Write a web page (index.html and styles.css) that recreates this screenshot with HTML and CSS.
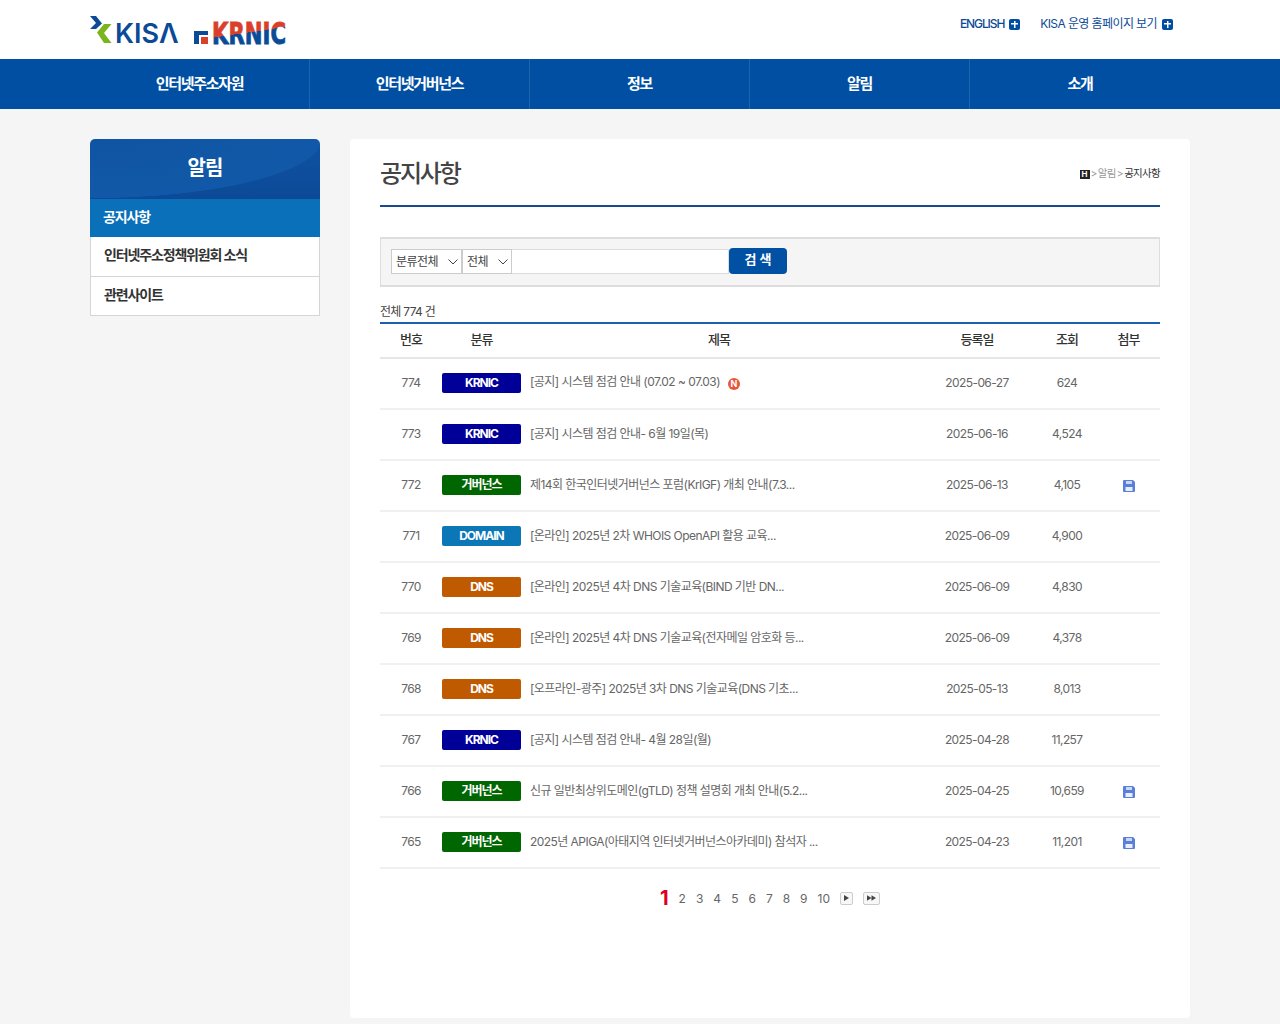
FILE: index.html
```html
<!DOCTYPE html>
<html lang="ko">
<head>
<meta charset="utf-8">
<title>공지사항</title>
<link rel="stylesheet" href="styles.css">
</head>
<body>
<header class="top">
  <div class="wrap top-inner">
    <div class="logos">
      <a class="logo-kisa">
        <svg class="kisa-mark" viewBox="0 0 22 28" width="22" height="28"><path d="M0 0 L6 0 L12 7.5 L6 13 L0 13 L6 7 Z" fill="#0b4a96"/><path d="M21.5 8 L14 8 L7 16.5 L14 27 L21.5 27 L14 17 Z" fill="#7ab51d"/></svg>
        <span class="kisa-text">KISΛ</span>
      </a>
      <a class="logo-krnic">
        <svg class="krnic-mark" viewBox="0 0 14 14" width="14" height="14"><path d="M0 1 H14 V5 H5 V14 H0 Z" fill="#0b4a96"/><rect x="7" y="7" width="7" height="7" fill="#d8402c"/></svg>
        <svg class="krnic-word" viewBox="0 0 120 44" width="120" height="44">
          <defs><linearGradient id="krnicFill" gradientUnits="userSpaceOnUse" x1="35.9" y1="17" x2="38.1" y2="32"><stop offset="0.5" stop-color="#d8402c"/><stop offset="0.5" stop-color="#0b4a96"/></linearGradient></defs>
          <text class="krnic-text" x="1" y="36" textLength="74" lengthAdjust="spacingAndGlyphs" fill="url(#krnicFill)" stroke="url(#krnicFill)">KRNIC</text>
        </svg>
      </a>
    </div>
    <div class="util">
      <a class="util-link en">ENGLISH <i class="plus"></i></a>
      <a class="util-link">KISA 운영 홈페이지 보기 <i class="plus"></i></a>
    </div>
  </div>
</header>
<nav class="gnb">
  <div class="wrap gnb-inner">
    <a>인터넷주소자원</a>
    <a>인터넷거버넌스</a>
    <a>정보</a>
    <a>알림</a>
    <a>소개</a>
  </div>
</nav>
<div class="wrap content">
  <aside class="side">
    <h2 class="side-title">알림</h2>
    <a class="side-item active">공지사항</a>
    <a class="side-item">인터넷주소정책위원회 소식</a>
    <a class="side-item">관련사이트</a>
  </aside>
  <main class="main">
    <div class="page-head">
      <h1>공지사항</h1>
      <div class="crumb"><i class="home">H</i> &gt; 알림 &gt; <b>공지사항</b></div>
    </div>
    <form class="search">
      <div class="fake-select s1">분류전체<svg class="chev" viewBox="0 0 10 6" width="10" height="6"><path d="M0.5 0.5 L5 5 L9.5 0.5" fill="none" stroke="#444" stroke-width="1"/></svg></div>
      <div class="fake-select s2">전체<svg class="chev" viewBox="0 0 10 6" width="10" height="6"><path d="M0.5 0.5 L5 5 L9.5 0.5" fill="none" stroke="#444" stroke-width="1"/></svg></div>
      <div class="fake-input"></div>
      <div class="btn">검 색</div>
    </form>
    <p class="total">전체 774 건</p>
    <table class="list">
      <colgroup><col class="c1"><col class="c2"><col class="c3"><col class="c4"><col class="c5"><col class="c6"></colgroup>
      <thead>
        <tr><th>번호</th><th>분류</th><th>제목</th><th>등록일</th><th>조회</th><th>첨부</th></tr>
      </thead>
      <tbody>
        <tr><td>774</td><td><span class="tag krnic">KRNIC</span></td><td class="t">[공지] 시스템 점검 안내 (07.02 ~ 07.03)<i class="new">N</i></td><td>2025-06-27</td><td>624</td><td></td></tr>
        <tr><td>773</td><td><span class="tag krnic">KRNIC</span></td><td class="t">[공지] 시스템 점검 안내- 6월 19일(목)</td><td>2025-06-16</td><td>4,524</td><td></td></tr>
        <tr><td>772</td><td><span class="tag gov">거버넌스</span></td><td class="t">제14회 한국인터넷거버넌스 포럼(KrIGF) 개최 안내(7.3...</td><td>2025-06-13</td><td>4,105</td><td><svg class="disk" viewBox="0 0 12 12" width="12" height="12"><path d="M0 1 Q0 0 1 0 H10 L12 2 V11 Q12 12 11 12 H1 Q0 12 0 11 Z" fill="#5a7fd8"/><rect x="3" y="1" width="6" height="3" fill="#c9d6f5"/><rect x="2.5" y="7" width="7" height="4" fill="#e8eefc"/></svg></td></tr>
        <tr><td>771</td><td><span class="tag domain">DOMAIN</span></td><td class="t">[온라인] 2025년 2차 WHOIS OpenAPI 활용 교육...</td><td>2025-06-09</td><td>4,900</td><td></td></tr>
        <tr><td>770</td><td><span class="tag dns">DNS</span></td><td class="t">[온라인] 2025년 4차 DNS 기술교육(BIND 기반 DN...</td><td>2025-06-09</td><td>4,830</td><td></td></tr>
        <tr><td>769</td><td><span class="tag dns">DNS</span></td><td class="t">[온라인] 2025년 4차 DNS 기술교육(전자메일 암호화 등...</td><td>2025-06-09</td><td>4,378</td><td></td></tr>
        <tr><td>768</td><td><span class="tag dns">DNS</span></td><td class="t">[오프라인-광주] 2025년 3차 DNS 기술교육(DNS 기초...</td><td>2025-05-13</td><td>8,013</td><td></td></tr>
        <tr><td>767</td><td><span class="tag krnic">KRNIC</span></td><td class="t">[공지] 시스템 점검 안내- 4월 28일(월)</td><td>2025-04-28</td><td>11,257</td><td></td></tr>
        <tr><td>766</td><td><span class="tag gov">거버넌스</span></td><td class="t">신규 일반최상위도메인(gTLD) 정책 설명회 개최 안내(5.2...</td><td>2025-04-25</td><td>10,659</td><td><svg class="disk" viewBox="0 0 12 12" width="12" height="12"><path d="M0 1 Q0 0 1 0 H10 L12 2 V11 Q12 12 11 12 H1 Q0 12 0 11 Z" fill="#5a7fd8"/><rect x="3" y="1" width="6" height="3" fill="#c9d6f5"/><rect x="2.5" y="7" width="7" height="4" fill="#e8eefc"/></svg></td></tr>
        <tr><td>765</td><td><span class="tag gov">거버넌스</span></td><td class="t">2025년 APIGA(아태지역 인터넷거버넌스아카데미) 참석자 ...</td><td>2025-04-23</td><td>11,201</td><td><svg class="disk" viewBox="0 0 12 12" width="12" height="12"><path d="M0 1 Q0 0 1 0 H10 L12 2 V11 Q12 12 11 12 H1 Q0 12 0 11 Z" fill="#5a7fd8"/><rect x="3" y="1" width="6" height="3" fill="#c9d6f5"/><rect x="2.5" y="7" width="7" height="4" fill="#e8eefc"/></svg></td></tr>
      </tbody>
    </table>
    <div class="paging">
      <b class="cur">1</b><a>2</a><a>3</a><a>4</a><a>5</a><a>6</a><a>7</a><a>8</a><a>9</a><a>10</a>
      <span class="pg-btn one"><svg viewBox="0 0 6 7" width="5" height="6"><path d="M0 0 L6 3.5 L0 7 Z" fill="#444"/></svg></span>
      <span class="pg-btn two"><svg viewBox="0 0 11 7" width="9" height="6"><path d="M0 0 L5.5 3.5 L0 7 Z M5.5 0 L11 3.5 L5.5 7 Z" fill="#444"/></svg></span>
    </div>
  </main>
</div>
</body>
</html>
```
FILE: styles.css
```css
* { box-sizing: border-box; }
html, body { margin: 0; padding: 0; }
body {
  background: #f5f5f5;
  font-family: Inter, "Noto Sans CJK KR", sans-serif;
  color: #555;
  font-size: 13px;
  height: 1024px;
  overflow: hidden;
}
.wrap { width: 1100px; margin: 0 auto; }
.top { background: #fff; height: 59px; }
.top-inner { display: flex; justify-content: space-between; height: 59px; }
.logos { display: flex; align-items: flex-start; }
.logo-kisa { display: flex; align-items: flex-start; margin-top: 16px; }
.kisa-mark { display: block; flex: none; }
.kisa-text {
  font-family: Inter, sans-serif;
  font-weight: 600;
  font-size: 27px;
  line-height: 27px;
  color: #0b4a96;
  margin: 4px 0 0 3px;
  letter-spacing: 0;
}
.logo-krnic { display: flex; align-items: flex-end; margin: 22px 0 0 15px; height: 22px; flex: none; }
.krnic-mark { display: block; flex: none; }
.krnic-word { display: block; flex: none; margin: 0 -44px -8px 3px; }
.krnic-text {
  font-family: "DejaVu Sans", sans-serif;
  font-weight: 700;
  font-size: 30px;
  stroke-width: 0.9px;
}
.util { display: flex; gap: 20px; padding: 14px 17px 0 0; align-items: flex-start; }
.util-link { color: #0b4a96; font-size: 12px; line-height: 20px; letter-spacing: -0.6px; display: flex; align-items: center; gap: 5px; }
.util-link.en { font-weight: 500; letter-spacing: -1.1px; }
.plus {
  display: inline-block; width: 11px; height: 11px; border-radius: 2px;
  background:
    linear-gradient(#fff, #fff) center / 7px 1.5px no-repeat,
    linear-gradient(#fff, #fff) center / 1.5px 7px no-repeat,
    #004ea2;
}
.gnb { background: #004fa3; height: 50px; }
.gnb-inner { display: flex; height: 50px; }
.gnb-inner a {
  width: 220px; text-align: center; line-height: 49px;
  color: #fff; font-size: 15px; font-weight: 700; letter-spacing: -1.3px;
  border-right: 1px solid #1d63ad;
}
.gnb-inner a:last-child { border-right: 0; }
.content { display: flex; gap: 30px; padding-top: 30px; align-items: flex-start; }
.side { width: 230px; flex: none; }
.side-title {
  margin: 0; height: 60px; line-height: 59px; text-align: center;
  color: #fff; font-size: 20px; font-weight: 700; letter-spacing: -1px;
  border-radius: 5px 5px 0 0;
  background:
    radial-gradient(ellipse 235px 60px at 0 0, #0f54a3 0, #1159a8 98%, transparent 99%),
    linear-gradient(#0f52a2, #0c4a97);
}
.side-item {
  display: block; height: 40px; line-height: 36px; padding-left: 13px;
  background: #fff; color: #333; font-size: 14px; font-weight: 700; letter-spacing: -1.15px;
  border: 1px solid #d5d5d5; border-top: 0;
}
.side-item.active { background: #0a70b9; color: #fff; height: 38px; border: 0; padding-left: 13px; line-height: 35px; }
.side-item:last-child { height: 39px; }
.main {
  width: 840px; height: 879px; background: #fff; padding: 0 30px;
  border-radius: 4px;
}
.page-head {
  display: flex; justify-content: space-between; align-items: center;
  height: 68px; border-bottom: 2px solid #1a4b8f; 
}
.page-head h1 { margin: 0; font-size: 24px; font-weight: 500; color: #444; letter-spacing: -2.2px; position: relative; top: -1px; }
.crumb { font-size: 10.5px; color: #999; letter-spacing: -0.7px; word-spacing: -1.2px; }
.crumb b { font-weight: 400; color: #333; }
.home {
  display: inline-block; width: 10px; height: 9px; background: #222; color: #fff;
  font-style: normal; font-size: 8px; line-height: 9px; text-align: center; font-weight: 700; letter-spacing: 0;
}
.search {
  margin-top: 30px; height: 50px; background: #f5f5f5; border: 1px solid #ddd; border-bottom-width: 2px;
  border-top-width: 2px; display: flex; align-items: flex-start; padding: 9px 0 0 10px;
}
.fake-select {
  background: #fff; border: 1px solid #ccc; font-size: 12px; letter-spacing: -0.5px;
  line-height: 24px; padding-left: 4px; color: #444; position: relative; margin-top: 1px; height: 25px;
}
.s1 { width: 71px; }
.s2 { width: 50px; }
.chev { position: absolute; right: 3px; top: 9px; }
.fake-input { width: 217px; height: 25px; margin-top: 1px; background: #fff; border: 1px solid #ddd; border-left: 0; }
.btn {
  width: 58px; height: 26px; background: #0050a4; border-radius: 4px; color: #fff;
  font-size: 13px; font-weight: 700; text-align: center; line-height: 23px;
}
.total { margin: 14px 0 0; font-size: 12px; line-height: 22px; height: 21px; color: #444; letter-spacing: -0.7px; }
.list { width: 780px; table-layout: fixed; border-collapse: collapse; border-top: 2px solid #1a5fb0; }
.c1 { width: 62px; } .c2 { width: 79px; } .c3 { width: 396px; } .c4 { width: 120px; } .c5 { width: 60px; } .c6 { width: 63px; }
.list th {
  height: 35px; background: #fff; font-size: 13px; font-weight: 500; color: #333;
  letter-spacing: -1px; border-bottom: 2px solid #e6e6e6; padding: 0 0 4px;
}
.list td {
  height: 51px; padding: 0 0 3px; text-align: center; font-size: 12px; color: #666;
  letter-spacing: -0.6px; border-bottom: 2px solid #f0f0f0;
}
.list td.t { text-align: left; padding: 0 0 5px 9px; letter-spacing: -0.55px; }
.tag {
  display: block; width: 79px; height: 20px; margin-top: 2px; line-height: 19px; border-radius: 2px; color: #fff;
  font-size: 12px; font-weight: 700; letter-spacing: -1px;
}
.krnic { background: #000099; }
.gov { background: #006600; }
.domain { background: #0b77b7; }
.dns { background: #bf5a00; }
.new {
  display: inline-block; width: 12px; height: 12px; border-radius: 50%; margin-left: 8px; vertical-align: -1px;
  background: #e8553a; color: #fff; font-style: normal; font-size: 9px; line-height: 12px; text-align: center; font-weight: 700; letter-spacing: 0;
}
.disk { display: block; margin: 3px auto 0; }
.paging { display: flex; justify-content: center; align-items: center; margin-top: 18px; height: 22px; gap: 10px; font-size: 12px; color: #666; }
.cur { color: #e0001b; font-size: 20px; font-weight: 700; line-height: 22px; }
.pg-btn { display: flex; align-items: center; justify-content: center; height: 13px; border: 1px solid #ccc; border-radius: 2px; background: #f7f7f7; }
.pg-btn.one { width: 13px; }
.pg-btn.two { width: 17px; }
```
